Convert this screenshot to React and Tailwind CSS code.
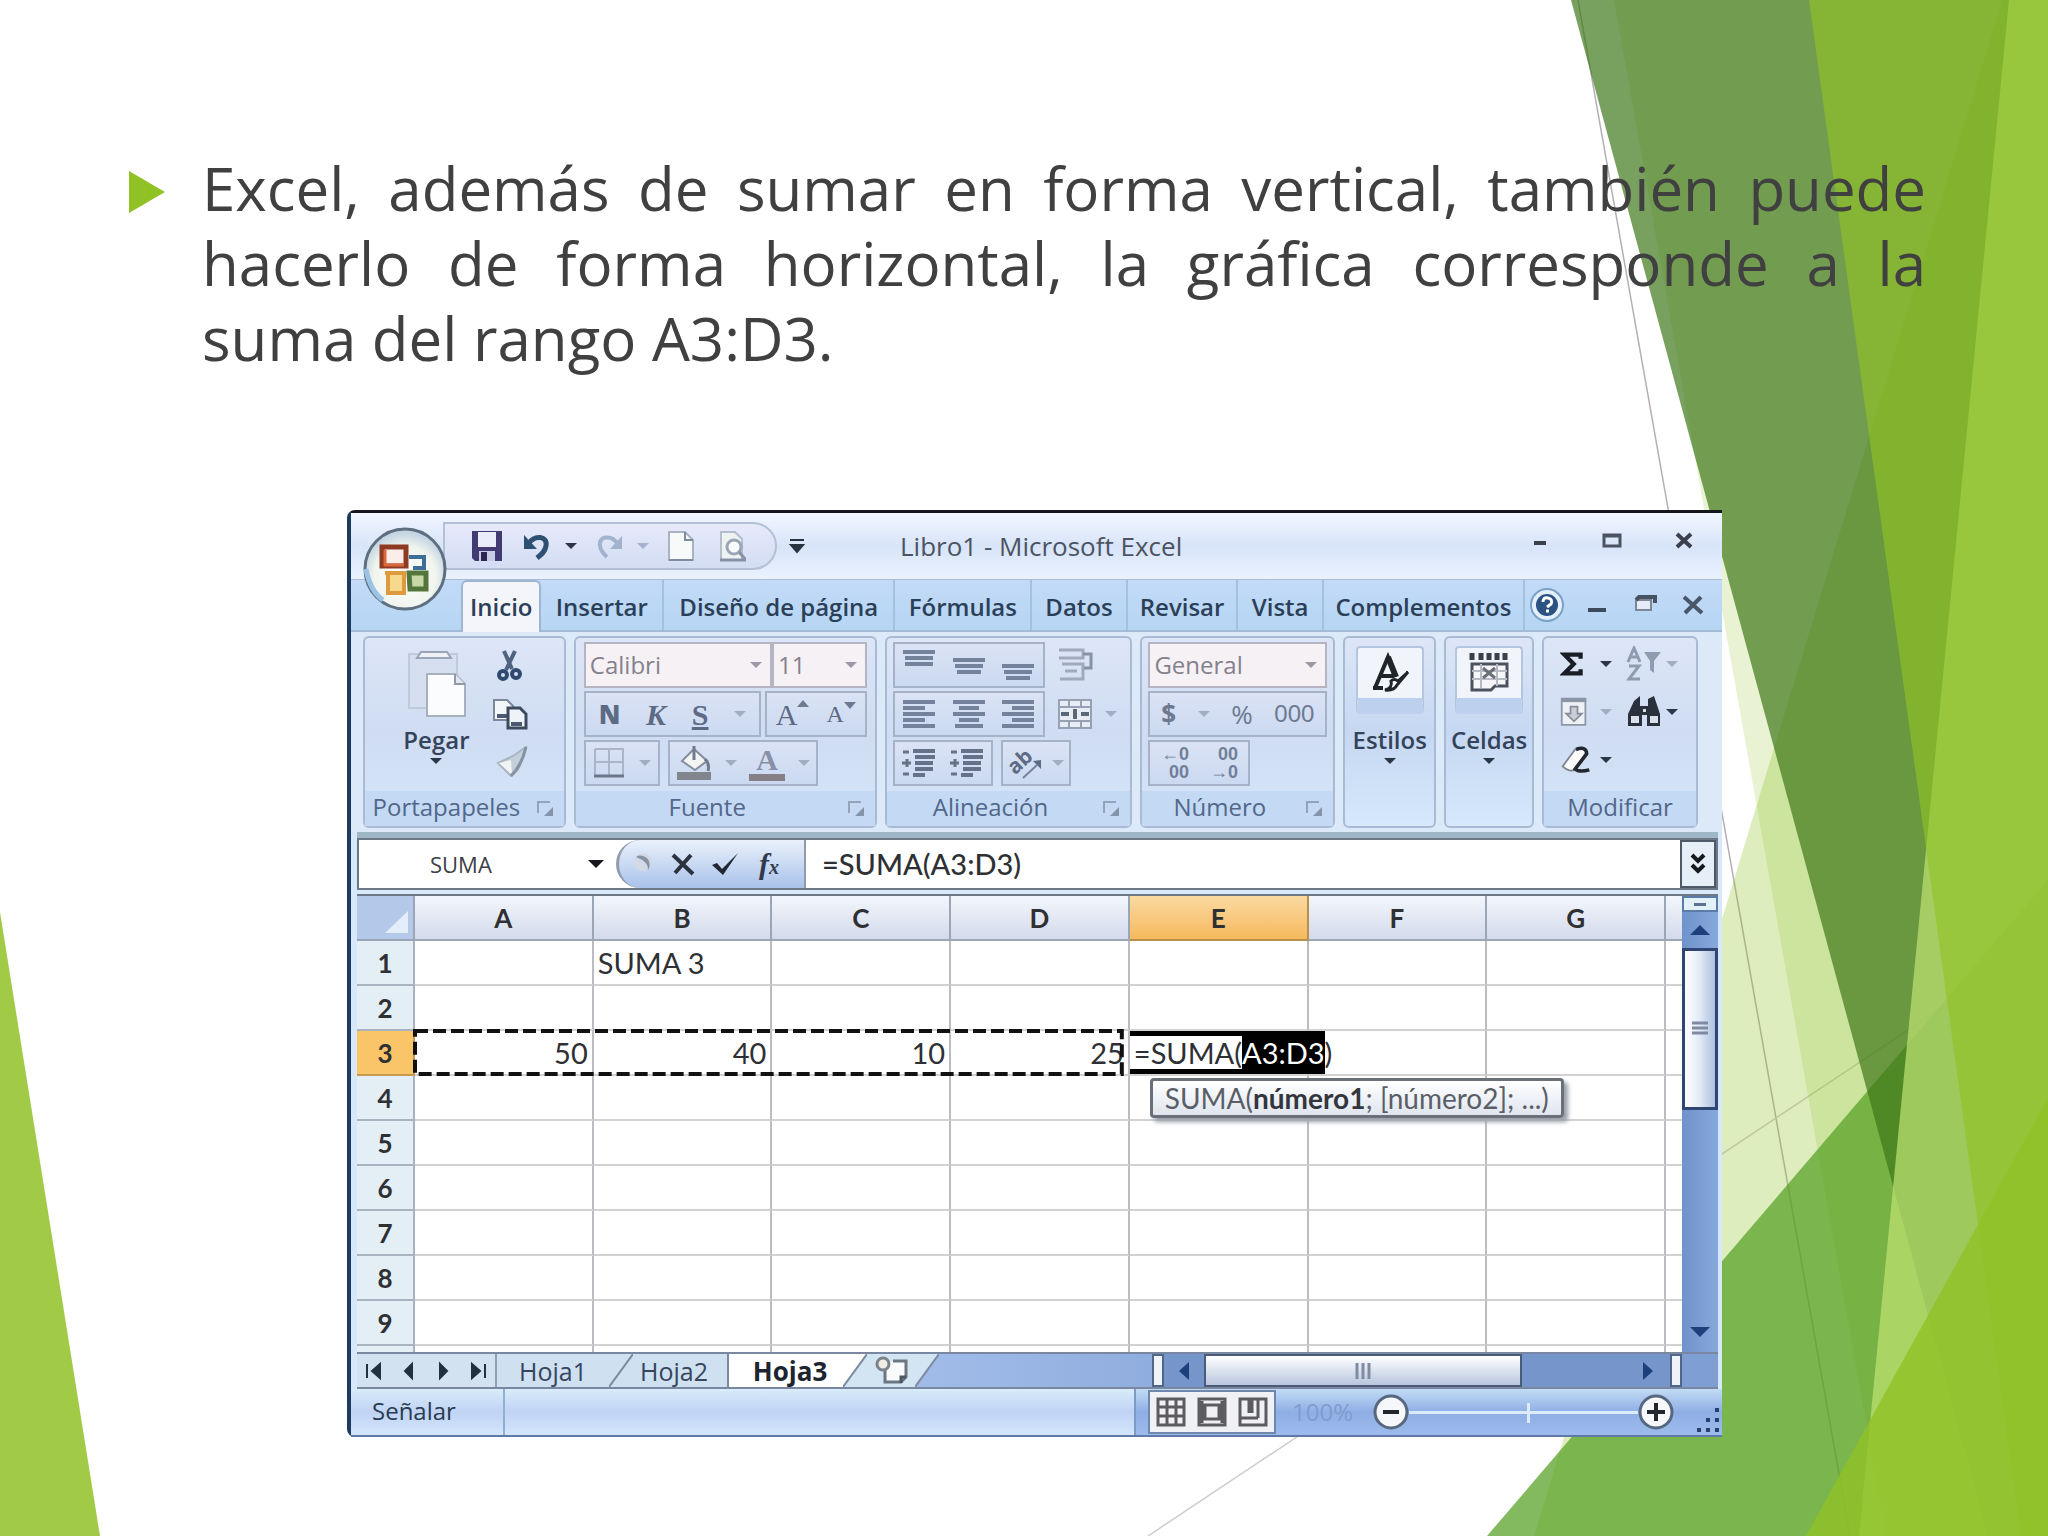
import React, { useState } from 'react';

const columns = ['A', 'B', 'C', 'D', 'E', 'F', 'G'];
const rows = [1, 2, 3, 4, 5, 6, 7, 8, 9];

const cells = {
  B1: 'SUMA 3',
  A3: '50',
  B3: '40',
  C3: '10',
  D3: '25',
};

const ribbonTabs = ['Insertar', 'Diseño de página', 'Fórmulas', 'Datos', 'Revisar', 'Vista', 'Complementos'];

// Slide background facets
const Background = () => (
  <svg className="absolute inset-0 h-full w-full" viewBox="0 0 2048 1536" preserveAspectRatio="none" aria-hidden="true">
    <path d="M1578 0L1850 1536" stroke="#b5afb5" strokeWidth="1.5" />
    <path d="M1148 1536L2048 937" stroke="#cfcbd2" strokeWidth="1.5" />
    <polygon points="1614,0 2048,0 2048,1536 1886,1536" fill="#90c226" opacity="0.2" />
    <polygon points="2002,0 2048,0 2048,1536 1534,1536" fill="#90c226" opacity="0.3" />
    <polygon points="1487,1536 2048,880 2048,1536" fill="#54a021" opacity="0.72" />
    <polygon points="1571,0 2048,0 2048,1536 1988,1536" fill="#3f7819" opacity="0.7" />
    <polygon points="2009,0 2048,0 2048,1536 1859,1536" fill="#c0e474" opacity="0.7" />
    <polygon points="1809,0 2048,0 2048,1536 2021,1536" fill="#90c226" opacity="0.65" />
    <polygon points="1806,1536 2048,1098 2048,1536" fill="#90c226" opacity="0.8" />
    <polygon points="0,912 100,1536 0,1536" fill="#90c226" opacity="0.85" />
  </svg>
);

const Caret = ({ className = 'text-[#2c3646]' }) => (
  <svg className={`w-3 shrink-0 ${className}`} viewBox="0 0 12 7" aria-hidden="true">
    <path d="M0 0h12L6 6z" fill="currentColor" />
  </svg>
);

const IconButton = ({ label, className = '', children }) => (
  <button type="button" aria-label={label} className={`flex items-center justify-center ${className}`}>
    {children}
  </button>
);

const OfficeLogo = () => (
  <svg viewBox="0 0 84 84" className="h-full w-full" aria-hidden="true">
    <defs>
      <radialGradient id="orb" cx="50%" cy="60%" r="55%">
        <stop offset="0" stopColor="#ffffff" />
        <stop offset="0.7" stopColor="#f1f5ee" />
        <stop offset="1" stopColor="#c5d5e3" />
      </radialGradient>
    </defs>
    <circle cx="42" cy="42" r="40" fill="url(#orb)" stroke="#5e6f80" strokeWidth="3" />
    <path d="M3 42q4 22 17 31" fill="none" stroke="#9cc3e6" strokeWidth="5" />
    <path d="M19 20h24v19H19z" fill="#fbeee8" stroke="#8f3a22" strokeWidth="5" />
    <path d="M22 23v15h19" fill="none" stroke="#d9693c" strokeWidth="3" />
    <path d="M46 30h15v11H50" fill="none" stroke="#3e6f98" strokeWidth="4" />
    <path d="M22 46h19v20H25V48" fill="#f6d98c" stroke="#e09a3e" strokeWidth="4" />
    <path d="M46 46h17v16H47z" fill="#c6d8a8" stroke="#54763a" strokeWidth="5" />
  </svg>
);

const TitleBar = () => (
  <div className="grid h-[67px] grid-cols-[549px_auto_1fr] items-center border-b border-[#a9bcd6] bg-gradient-to-b from-[#f2f7ff] via-[#d8e4fa] to-[#e9f2fd]">
    <div className="flex items-center pl-[92px]">
      <div className="flex h-12 w-[334px] items-center rounded-r-full border-2 border-[#b4c0d6] bg-gradient-to-b from-[#e6eafb] to-[#d3ddf3] pl-6">
        <IconButton label="Guardar" className="w-9">
          <svg className="w-8" viewBox="0 0 32 32">
            <path d="M1 1h30v30H4l-3-3z" fill="#423a72" />
            <rect x="7" y="2" width="18" height="15" fill="#e9ecfa" />
            <rect x="8" y="21" width="16" height="10" fill="#c9cce6" />
            <rect x="10" y="22" width="6" height="9" fill="#2b2650" />
          </svg>
        </IconButton>
        <IconButton label="Deshacer" className="ml-4 w-8">
          <svg className="w-7" viewBox="0 0 28 28">
            <path d="M5 12C12 2 25 4 23 14c-1 6-5 9-9 12" fill="none" stroke="#2e5072" strokeWidth="5" />
            <path d="M1 3v14h13z" fill="#2e5072" />
          </svg>
        </IconButton>
        <span className="ml-3"><Caret /></span>
        <IconButton label="Rehacer" className="ml-4 w-8">
          <svg className="w-7" viewBox="0 0 28 28">
            <path d="M23 12C16 2 3 4 5 14c1 6 4 8 7 11" fill="none" stroke="#a3b2cd" strokeWidth="4" />
            <path d="M27 4v13H15z" fill="#a3b2cd" />
          </svg>
        </IconButton>
        <span className="ml-3"><Caret className="text-[#a3b2cd]" /></span>
        <IconButton label="Nuevo" className="ml-4 w-8">
          <svg className="w-7" viewBox="0 0 28 32">
            <path d="M2 2h16l8 8v20H2z" fill="#f7faf8" stroke="#a9b4c3" strokeWidth="2" />
            <path d="M18 2v8h8M2 30h24" fill="none" stroke="#7f8c9d" strokeWidth="2" />
          </svg>
        </IconButton>
        <IconButton label="Vista preliminar" className="ml-5 w-8">
          <svg className="w-8" viewBox="0 0 32 32">
            <path d="M4 2h14l7 7v21H4z" fill="#eef2f2" stroke="#b4becb" strokeWidth="2" />
            <circle cx="17" cy="17" r="7" fill="#f8fbfb" stroke="#9aa6b6" strokeWidth="3" />
            <path d="M22 22l6 7M3 30h26" stroke="#8592a5" strokeWidth="3" />
          </svg>
        </IconButton>
      </div>
      <IconButton label="Personalizar barra" className="ml-2 w-6">
        <svg className="w-4" viewBox="0 0 16 16">
          <path d="M1 2h14M2 7h12l-6 7z" fill="#2a3342" stroke="#2a3342" strokeWidth="2" />
        </svg>
      </IconButton>
    </div>
    <h1 className="text-[26px] text-[#4c5361]">Libro1 - Microsoft Excel</h1>
    <div className="flex items-center justify-end gap-12 pb-3 pr-[26px]">
      <IconButton label="Minimizar" className="h-6 w-6">
        <svg className="w-6" viewBox="0 0 24 24"><path d="M6 15h12" stroke="#3a404c" strokeWidth="4" /></svg>
      </IconButton>
      <IconButton label="Restaurar" className="h-6 w-6">
        <svg className="w-6" viewBox="0 0 24 24"><path d="M4 7h16v11H4zM4 8h16" fill="none" stroke="#4c5360" strokeWidth="3" /></svg>
      </IconButton>
      <IconButton label="Cerrar" className="h-6 w-6">
        <svg className="w-6" viewBox="0 0 24 24"><path d="M5 6l14 13M19 6L5 19" stroke="#3a404c" strokeWidth="4" /></svg>
      </IconButton>
    </div>
  </div>
);

const TabBar = () => (
  <nav className="flex h-[52px] border-b-2 border-[#a2bbd6] bg-gradient-to-b from-[#c3daf8] to-[#b5d6f3] pl-[110px] text-2xl font-semibold text-[#2c3f58]">
    <div className="grid grow grid-cols-[80fr_122fr_230fr_136fr_95fr_110fr_85fr_200fr] items-stretch">
      <button type="button" className="mb-[-2px] whitespace-nowrap rounded-t-md border-2 border-b-0 border-[#9fb6d0] bg-[#f3f5fb]">Inicio</button>
      {ribbonTabs.map((tab) => (
        <button key={tab} type="button" className="whitespace-nowrap border-r-2 border-[#a4c1e0] pt-1">{tab}</button>
      ))}
    </div>
    <div className="flex w-[197px] items-center gap-4 pl-1">
      <IconButton label="Ayuda" className="w-9">
        <svg className="w-9" viewBox="0 0 36 36">
          <circle cx="18" cy="18" r="16" fill="#e3f0fc" stroke="#7aa0c6" strokeWidth="2" />
          <circle cx="18" cy="18" r="11" fill="#2c5282" />
          <path d="M14 15q0-5 5-4t3 6l-4 3M17 24h3" fill="none" stroke="#fff" strokeWidth="3" />
        </svg>
      </IconButton>
      <IconButton label="Minimizar libro" className="w-8">
        <svg className="w-6" viewBox="0 0 24 24"><path d="M3 17h18" stroke="#3c4b5e" strokeWidth="4" /></svg>
      </IconButton>
      <IconButton label="Restaurar libro" className="w-8">
        <svg className="w-6" viewBox="0 0 24 24"><path d="M3 7h15v10H3z" fill="#e4ecf7" stroke="#7b8797" strokeWidth="2" /><path d="M3 7l3-3h16v6" fill="none" stroke="#47515f" strokeWidth="4" /></svg>
      </IconButton>
      <IconButton label="Cerrar libro" className="w-8">
        <svg className="w-6" viewBox="0 0 24 24"><path d="M3 4l18 16M20 4L4 20" stroke="#4a5768" strokeWidth="4" /></svg>
      </IconButton>
    </div>
  </nav>
);

const Launcher = () => (
  <svg className="absolute right-2 top-2 w-5" viewBox="0 0 20 20" aria-hidden="true">
    <path d="M2 14V3h12" fill="none" stroke="#93a3b9" strokeWidth="2" />
    <path d="M17 8v9H8z" fill="#8393aa" />
  </svg>
);

const Group = ({ title, launcher, children }) => (
  <section className="flex min-w-0 flex-col rounded-md border-2 border-[#a9bbd4] bg-gradient-to-b from-[#dde6f7] via-[#cfdcf2] to-[#d6e6fa]">
    <div className="grow">{children}</div>
    <div className={`relative h-[35px] bg-[#c4d9f3] text-center text-2xl font-medium leading-8 text-[#52678a] ${launcher ? 'pr-9' : ''}`}>
      {title}
      {launcher && <Launcher />}
    </div>
  </section>
);

const Box = ({ className = '', children }) => (
  <div className={`flex h-[46px] items-center justify-around border-2 border-[#a5b2c8] bg-gradient-to-b from-[#dbe3f5] to-[#cbd9f1] ${className}`}>
    {children}
  </div>
);

const Combo = ({ label, value, className = '' }) => (
  <label className={`relative flex h-[46px] items-center border-2 border-[#b6b4c2] bg-[#f6f1f5] ${className}`}>
    <select aria-label={label} className="h-full w-full appearance-none bg-transparent pl-1 text-2xl text-[#85818c]" defaultValue={value}>
      <option>{value}</option>
    </select>
    <span className="pointer-events-none absolute right-2"><Caret className="text-[#9c98a6]" /></span>
  </label>
);

const alignShapes = {
  top: 'M2 3h32M4 9h28M4 15h28',
  middle: 'M2 11h32M4 17h28M6 23h24',
  bottom: 'M2 17h32M4 23h28M6 29h24',
  left: 'M2 4h32M2 10h22M2 16h32M2 22h22M2 28h32',
  center: 'M2 4h32M8 10h20M2 16h32M8 22h20M4 28h28',
  right: 'M2 4h32M12 10h22M2 16h32M12 22h22M2 28h32',
};

const AlignButton = ({ label, shape }) => (
  <IconButton label={label}>
    <svg className="w-9" viewBox="0 0 36 32">
      <path d={alignShapes[shape]} stroke="#74829b" strokeWidth="4" />
    </svg>
  </IconButton>
);

const IndentButton = ({ label }) => (
  <IconButton label={label}>
    <svg className="w-9" viewBox="0 0 36 32">
      <path d="M12 4h22M14 10h20M14 16h18M14 22h18M12 28h12" stroke="#66728a" strokeWidth="4" />
      <path d="M2 5h6M1 16h9M2 27h6M6 12v8" stroke="#66728a" strokeWidth="3" />
    </svg>
  </IconButton>
);

const Clipboard = () => (
  <div className="grid grid-cols-[1fr_88px] px-1 pt-2">
    <button type="button" className="flex flex-col items-center pl-8">
      <svg className="h-[72px] w-[66px]" viewBox="0 0 66 72" aria-hidden="true">
        <path d="M6 8h48v54H6z" fill="#d5dff0" stroke="#c0cade" strokeWidth="2" />
        <path d="M14 12h34l-4-6H18z" fill="#eef1f7" stroke="#9aa5b8" strokeWidth="2" />
        <path d="M24 28h28l10 10v32H24z" fill="#fbfcfd" stroke="#a7b1be" strokeWidth="2" />
        <path d="M52 28v10h10" fill="#dfe6ee" stroke="#8f99a8" strokeWidth="2" />
      </svg>
      <span className="mt-1 text-2xl font-semibold leading-9 text-[#34435a]">Pegar</span>
      <Caret />
    </button>
    <div className="flex flex-col items-center gap-4 pr-3 pt-1">
      <IconButton label="Cortar">
        <svg className="h-8 w-8" viewBox="0 0 32 32">
          <path d="M10 1l8 18M21 1l-9 19" stroke="#4f6380" strokeWidth="4" />
          <circle cx="9" cy="25" r="4" fill="none" stroke="#2e4a70" strokeWidth="4" />
          <circle cx="22" cy="24" r="4" fill="none" stroke="#2e4a70" strokeWidth="4" />
        </svg>
      </IconButton>
      <IconButton label="Copiar">
        <svg className="h-8 w-9" viewBox="0 0 36 32">
          <path d="M2 2h13l6 6v14H2z" fill="#f4f7fa" stroke="#7c899c" strokeWidth="2" />
          <path d="M5 18h10" stroke="#4b5a70" strokeWidth="4" />
          <path d="M16 10h12l6 6v14H16z" fill="#eef3f8" stroke="#3c4a5e" strokeWidth="3" />
          <path d="M19 26h11" stroke="#4b5a70" strokeWidth="4" />
        </svg>
      </IconButton>
      <IconButton label="Copiar formato">
        <svg className="h-8 w-9" viewBox="0 0 36 32">
          <path d="M34 1L21 10 6 17l13 13q9-6 10-14z" fill="#c4cfd9" stroke="#a9b5c3" strokeWidth="2" />
          <path d="M7 17l12-3 1 15z" fill="#f1f5f2" />
          <path d="M34 1q-4 18-15 29" fill="none" stroke="#8491a1" strokeWidth="3" />
        </svg>
      </IconButton>
    </div>
  </div>
);

const FontGroup = () => (
  <div className="flex flex-col gap-[3px] px-2 pt-1">
    <div className="grid grid-cols-[189fr_95fr]">
      <Combo label="Fuente" value="Calibri" />
      <Combo label="Tamaño de fuente" value="11" />
    </div>
    <div className="grid grid-cols-[178fr_102fr] gap-1 font-['Liberation_Serif',serif] text-[30px] text-[#5c6a84]">
      <Box>
        <button type="button" className="font-['Open_Sans',sans-serif] text-[26px] font-extrabold">N</button>
        <button type="button" className="font-bold italic">K</button>
        <button type="button" className="font-bold underline">S</button>
        <Caret className="text-[#a1adc3]" />
      </Box>
      <Box>
        <button type="button" className="flex items-start">A<svg className="mt-2 w-3" viewBox="0 0 12 8" aria-hidden="true"><path d="M6 0l6 7H0z" fill="#6d7a94" /></svg></button>
        <button type="button" className="flex items-start text-2xl">A<svg className="mt-1 w-3" viewBox="0 0 12 8" aria-hidden="true"><path d="M0 0h12L6 7z" fill="#6d7a94" /></svg></button>
      </Box>
    </div>
    <div className="flex gap-2">
      <Box className="w-[76px]">
        <IconButton label="Bordes">
          <svg className="w-8" viewBox="0 0 32 32">
            <path d="M2 2h28v26M2 2v26M16 2v26M2 15h28" fill="none" stroke="#aab5c9" strokeWidth="2" />
            <path d="M1 29h30" stroke="#6b7688" strokeWidth="3" />
          </svg>
        </IconButton>
        <Caret className="text-[#a1adc3]" />
      </Box>
      <Box className="w-[150px]">
        <IconButton label="Color de relleno">
          <svg className="w-9" viewBox="0 0 36 36">
            <path d="M6 16L18 4l13 12-12 9z" fill="#f3f4f4" stroke="#868f9d" strokeWidth="2" />
            <path d="M18 1v14M29 14q5 5 3 12" fill="none" stroke="#717b8c" strokeWidth="3" />
            <path d="M1 31h34" stroke="#80858e" strokeWidth="8" />
          </svg>
        </IconButton>
        <Caret className="text-[#a1adc3]" />
        <button type="button" className="flex h-9 w-9 items-center justify-center border-b-[7px] border-[#857f88] font-['Liberation_Serif',serif] text-[30px] font-bold leading-7 text-[#8790a6]">A</button>
        <Caret className="text-[#a1adc3]" />
      </Box>
    </div>
  </div>
);

const AlignmentGroup = () => (
  <div className="flex flex-col gap-[3px] px-1.5 pt-1">
    <div className="flex items-center gap-3">
      <Box className="w-[152px]">
        <AlignButton label="Alinear arriba" shape="top" />
        <AlignButton label="Alinear al medio" shape="middle" />
        <AlignButton label="Alinear abajo" shape="bottom" />
      </Box>
      <IconButton label="Ajustar texto">
        <svg className="w-9" viewBox="0 0 36 36">
          <path d="M2 3h24v8H2M5 17h21v15H3M8 24h12" fill="none" stroke="#a0aabc" strokeWidth="3" />
          <path d="M26 7h8v14h-7" fill="none" stroke="#8592a8" strokeWidth="3" />
        </svg>
      </IconButton>
    </div>
    <div className="flex items-center gap-3">
      <Box className="w-[152px]">
        <AlignButton label="Alinear a la izquierda" shape="left" />
        <AlignButton label="Centrar" shape="center" />
        <AlignButton label="Alinear a la derecha" shape="right" />
      </Box>
      <IconButton label="Combinar y centrar">
        <svg className="w-9" viewBox="0 0 36 32">
          <path d="M2 2h32v28H2zM2 9h32M2 23h32M12 2v7M24 2v7M12 23v7M24 23v7" fill="#e8edf5" stroke="#96a1b4" strokeWidth="2" />
          <path d="M4 16h8M24 16h8M18 11v10" stroke="#5c6778" strokeWidth="4" />
        </svg>
      </IconButton>
      <Caret className="text-[#a1adc3]" />
    </div>
    <div className="flex gap-2">
      <Box className="w-[100px]">
        <IndentButton label="Disminuir sangría" />
        <IndentButton label="Aumentar sangría" />
      </Box>
      <Box className="w-[70px]">
        <IconButton label="Orientación">
          <svg className="w-9 overflow-visible" viewBox="0 0 36 36">
            <text x="2" y="25" transform="rotate(-42 12 20)" fontFamily="Open Sans" fontSize="21" fontWeight="700" fill="#5d6b84">ab</text>
            <path d="M16 33l14-13" stroke="#76839a" strokeWidth="2" />
            <path d="M34 15v9l-8-8z" fill="#5d6b84" />
          </svg>
        </IconButton>
        <Caret className="text-[#a1adc3]" />
      </Box>
    </div>
  </div>
);

const NumberGroup = () => (
  <div className="flex flex-col gap-[3px] px-1.5 pt-1">
    <Combo label="Formato de número" value="General" />
    <Box className="text-2xl text-[#6c7991]">
      <button type="button" className="text-[26px] font-bold">$</button>
      <Caret className="text-[#a1adc3]" />
      <button type="button" className="text-[26px] font-medium">%</button>
      <button type="button" className="font-['Liberation_Sans',sans-serif] text-2xl">000</button>
    </Box>
    <Box className="w-[102px] font-['Liberation_Sans',sans-serif] text-[18px] font-bold leading-[18px] text-[#717f98]">
      <button type="button" className="text-right">←0<br />00</button>
      <button type="button" className="text-right">00<br />→0</button>
    </Box>
  </div>
);

const CollapsedGroup = ({ title, children }) => (
  <button type="button" className="flex min-w-0 flex-col items-center rounded-md border-2 border-[#a9bbd4] bg-gradient-to-b from-[#dde6f7] via-[#c6d8f2] to-[#d6e8fb] pt-2">
    <span className="flex h-[68px] w-[68px] items-start justify-center rounded border-2 border-b-[16px] border-[#b4c5e0] border-b-[#bdd0ee] bg-[#f1f4fa] pt-1">
      {children}
    </span>
    <span className="mt-2 text-2xl font-semibold leading-9 text-[#34435a]">{title}</span>
    <Caret />
  </button>
);

const EditGroup = () => (
  <div className="grid grid-cols-[1fr_1fr] gap-y-3 pl-4 pr-1 pt-2">
    <button type="button" aria-label="Autosuma" className="flex h-9 items-center gap-4">
      <svg className="w-6" viewBox="0 0 28 28"><path d="M24 8V3H5l11 11L5 25h19v-5" fill="none" stroke="#1a1d24" strokeWidth="5" /></svg>
      <Caret />
    </button>
    <button type="button" aria-label="Ordenar y filtrar" className="flex h-9 items-center gap-1">
      <svg className="w-9" viewBox="0 0 36 36">
        <path d="M2 16L8 2l6 14M4 11h8M3 20h10L3 33h11" fill="none" stroke="#8f9bb0" strokeWidth="3" />
        <path d="M18 6h17l-7 9v12l-4-3v-9z" fill="#8f9bb0" />
      </svg>
      <Caret className="text-[#a1adc3]" />
    </button>
    <button type="button" aria-label="Rellenar" className="flex h-9 items-center gap-3">
      <svg className="w-7" viewBox="0 0 32 36">
        <path d="M2 3h27v30H2z" fill="#eef2f6" stroke="#8a95a6" strokeWidth="2" />
        <path d="M2 5h28" stroke="#8a95a6" strokeWidth="4" />
        <path d="M12 12h8v8h5l-9 9-9-9h5z" fill="#c9ced4" stroke="#858e9b" strokeWidth="2" />
      </svg>
      <Caret className="text-[#a1adc3]" />
    </button>
    <button type="button" aria-label="Buscar y seleccionar" className="flex h-9 items-center gap-1">
      <svg className="w-9" viewBox="0 0 36 34">
        <path d="M8 6l6-5v10h8V4l6-3 6 18v12H21V20h-5v11H2V19z" fill="#2b313c" />
        <path d="M5 21h8v7H5zM24 21h8v7h-8zM17 14h3v3h-3z" fill="#d9e0ea" />
      </svg>
      <Caret />
    </button>
    <button type="button" aria-label="Borrar" className="flex h-9 items-center gap-2">
      <svg className="w-8" viewBox="0 0 36 34">
        <path d="M3 24L17 5q10-5 13 3L18 27q-6 5-15-3z" fill="#fbfbfb" stroke="#7c8491" strokeWidth="2" />
        <path d="M18 5q12-4 12 5L17 27q4 4 16 1" fill="none" stroke="#23272f" strokeWidth="4" />
      </svg>
      <Caret />
    </button>
  </div>
);

const Ribbon = () => (
  <div className="grid h-[200px] grid-cols-[203fr_303fr_248fr_195fr_93fr_90fr_156fr] gap-2 bg-[#dce9f8] py-1 pl-3 pr-6">
    <Group title="Portapapeles" launcher><Clipboard /></Group>
    <Group title="Fuente" launcher><FontGroup /></Group>
    <Group title="Alineación" launcher><AlignmentGroup /></Group>
    <Group title="Número" launcher><NumberGroup /></Group>
    <CollapsedGroup title="Estilos">
      <svg className="w-10" viewBox="0 0 40 42">
        <path d="M3 36h10M5 36L18 5l6 14M11 24h13" fill="none" stroke="#20242c" strokeWidth="4" />
        <path d="M18 5l8 20" stroke="#20242c" strokeWidth="6" />
        <path d="M38 20L27 33q-3 6-12 5 8-2 6-9 3-3 7 0z" fill="#fff" stroke="#20242c" strokeWidth="3" />
      </svg>
    </CollapsedGroup>
    <CollapsedGroup title="Celdas">
      <svg className="w-10" viewBox="0 0 40 42">
        <path d="M3 1v7M12 1v7M20 1v7M28 1v7M36 1v7" stroke="#3a3f49" strokeWidth="5" />
        <path d="M3 12h35v22H26l-4 4H3z" fill="#f6f6f8" stroke="#4c525e" strokeWidth="3" />
        <path d="M3 19h35M3 27h35M12 12v24M28 12v22" stroke="#b5bac4" strokeWidth="2" />
        <path d="M14 16l12 10M26 16L14 26" stroke="#6b7079" strokeWidth="3" />
      </svg>
    </CollapsedGroup>
    <Group title="Modificar"><EditGroup /></Group>
  </div>
);

const FormulaBar = ({ formula, onChange }) => (
  <div className="border-t-[6px] border-[#9fb6c6]">
    <div className="flex h-[52px] items-stretch border-2 border-[#6d7785] bg-white">
      <div className="relative flex w-[257px] items-center">
        <input aria-label="Cuadro de nombres" defaultValue="SUMA" className="w-full bg-transparent pl-[71px] text-[22px] text-[#3b4048] outline-none" />
        <svg className="absolute right-3 w-4" viewBox="0 0 16 10" aria-hidden="true"><path d="M0 1h16L8 9z" fill="#14171c" /></svg>
      </div>
      <div className="flex w-[190px] items-center gap-4 rounded-l-full border-l-[3px] border-r-2 border-[#8e9cae] bg-gradient-to-b from-[#eaf1fb] to-[#a9c2ea] pl-3">
        <svg className="w-6" viewBox="0 0 24 24" aria-hidden="true">
          <circle cx="12" cy="10" r="9" fill="#d3dae5" />
          <path d="M5 5a9 9 0 0 1 12 13q1-8-12-13z" fill="#8693a6" />
        </svg>
        <IconButton label="Cancelar">
          <svg className="w-6" viewBox="0 0 24 24"><path d="M2 3l20 19M20 3L4 21" stroke="#2d333e" strokeWidth="4" /></svg>
        </IconButton>
        <IconButton label="Introducir">
          <svg className="w-7" viewBox="0 0 28 24"><path d="M1 13l5-2 5 6L27 1 12 23z" fill="#222833" /></svg>
        </IconButton>
        <button type="button" aria-label="Insertar función" className="ml-1 font-['Liberation_Serif',serif] text-[30px] font-bold italic leading-8 text-[#313a4c]">
          f<span className="text-xl">x</span>
        </button>
      </div>
      <input
        aria-label="Barra de fórmulas"
        value={formula}
        onChange={onChange}
        className="min-w-0 grow px-4 font-['Lato',sans-serif] text-[29px] font-medium text-[#2e3034] outline-none"
      />
      <button type="button" aria-label="Expandir barra de fórmulas" className="flex w-9 items-center justify-center border-2 border-[#4d5966] bg-[#e6eef7]">
        <svg className="w-4" viewBox="0 0 16 22"><path d="M2 2l6 6 6-6M2 12l6 6 6-6" fill="none" stroke="#16191e" strokeWidth="4" /></svg>
      </button>
    </div>
  </div>
);

const Marquee = () => (
  <svg className="pointer-events-none absolute left-0 top-0 z-10 h-full w-[400%] overflow-visible" aria-hidden="true">
    <rect width="100%" height="100%" fill="none" stroke="#111" strokeWidth="4" strokeDasharray="13 5" />
  </svg>
);

const EditingCell = () => (
  <div className="absolute left-0 top-0 z-20 flex h-full w-full items-center whitespace-nowrap border-y-[5px] border-black bg-white pl-1 text-[29px]">
    <span>=SUMA(</span>
    <span className="bg-black leading-[43px] text-white">A3:D3</span>
    <span>)</span>
    <div className="absolute left-5 top-[42px] flex h-[40px] items-center rounded border-[3px] border-[#6b7078] bg-gradient-to-b from-white to-[#dfe5ef] px-3 text-[28px] text-[#5a5e66] shadow-[4px_4px_4px_#9aa0a8]">
      <span>SUMA(</span>
      <b className="font-bold text-[#33363c]">número1</b>
      <span className="whitespace-pre">; [número2]; ...)</span>
    </div>
  </div>
);

const Sheet = () => (
  <table className="w-full table-fixed border-separate border-spacing-0 bg-white font-['Lato',sans-serif] text-[29px] leading-8 text-[#2e3034]">
    <colgroup>
      <col className="w-[58px]" />
      {columns.map((c) => <col key={c} />)}
      <col className="w-4" />
    </colgroup>
    <thead>
      <tr className="h-[45px]">
        <th className="border-b-2 border-r-2 border-[#9aa5b5] bg-[#b4c8ea] p-0 pb-1 pr-1 align-bottom">
          <svg className="ml-auto w-6" viewBox="0 0 24 24" aria-label="Seleccionar todo"><path d="M23 0v22H0z" fill="#e4eefb" /></svg>
        </th>
        {columns.map((c) => (
          <th
            key={c}
            scope="col"
            className={`border-b-2 border-r-2 p-0 text-[26px] font-bold ${
              c === 'E'
                ? 'border-[#b98f4c] bg-gradient-to-b from-[#fbd9a0] to-[#f5b95c]'
                : 'border-[#9aa5b5] bg-gradient-to-b from-[#f3f6fc] to-[#d3daeb]'
            }`}
          >
            {c}
          </th>
        ))}
        <th className="border-b-2 border-[#9aa5b5] bg-gradient-to-b from-[#f3f6fc] to-[#d3daeb] p-0" />
      </tr>
    </thead>
    <tbody>
      {rows.map((r) => (
        <tr key={r} className="h-[45px]">
          <th
            scope="row"
            className={`border-b-2 border-r-2 p-0 text-[26px] font-bold ${
              r === 3 ? 'border-[#c79a52] bg-[#fac468]' : 'border-[#a7b3bf] bg-[#e3eef5]'
            }`}
          >
            {r}
          </th>
          {columns.map((c) => {
            const id = `${c}${r}`;
            return (
              <td
                key={id}
                className={`relative border-b-2 border-r-2 border-b-[#d2d2d4] border-r-[#bcbcc4] p-0 px-1 ${r === 3 ? 'text-right' : 'text-left'}`}
              >
                {cells[id]}
                {id === 'A3' && <Marquee />}
                {id === 'E3' && <EditingCell />}
              </td>
            );
          })}
          <td className="border-b-2 border-[#d2d2d4] p-0" />
        </tr>
      ))}
      <tr className="h-1.5">
        <th className="border-r-2 border-[#a7b3bf] bg-[#e3eef5] p-0" />
        {columns.map((c) => <td key={c} className="border-r-2 border-[#bcbcc4] p-0" />)}
        <td className="p-0" />
      </tr>
    </tbody>
  </table>
);

const VerticalScroll = () => (
  <div className="flex w-9 shrink-0 flex-col items-stretch bg-gradient-to-r from-[#6f92cb] to-[#87a8dc]">
    <div className="flex h-4 items-center justify-center border-2 border-[#5b7ba8] bg-[#e3f1f8]">
      <span className="h-[3px] w-3 bg-[#5c7390]" />
    </div>
    <IconButton label="Subir" className="h-9">
      <svg className="w-5" viewBox="0 0 20 12"><path d="M10 1l10 10H0z" fill="#1d3f7c" /></svg>
    </IconButton>
    <div className="flex h-[162px] items-center justify-center border-[3px] border-[#2f4672] bg-gradient-to-r from-white via-[#e2e9f6] to-[#aebfde]">
      <svg className="w-4" viewBox="0 0 16 16" aria-hidden="true"><path d="M0 2h16M0 7h16M0 12h16" stroke="#7e8ba3" strokeWidth="3" /></svg>
    </div>
    <IconButton label="Bajar" className="mt-auto h-10">
      <svg className="w-5" viewBox="0 0 20 12"><path d="M10 11l10-10H0z" fill="#1d3f7c" /></svg>
    </IconButton>
  </div>
);

const navShapes = [
  ['Primera hoja', 'M3 3v14M16 3l-8 7 8 7z'],
  ['Hoja anterior', 'M13 3l-7 7 7 7z'],
  ['Hoja siguiente', 'M7 3l7 7-7 7z'],
  ['Última hoja', 'M17 3v14M4 3l8 7-8 7z'],
];

// Slanted edge between two sheet tabs
const Slant = ({ left, right }) => (
  <svg className="h-full w-6 shrink-0" viewBox="0 0 24 36" preserveAspectRatio="none" aria-hidden="true">
    <path d="M0 0h24L0 36z" fill={left} />
    <path d="M24 0v36H0z" fill={right} />
    <path d="M24 0L0 36" stroke="#7b8aa0" strokeWidth="2" />
  </svg>
);

const SheetTabs = () => (
  <div className="flex h-[37px] items-stretch border-y-2 border-[#7988a0] bg-gradient-to-r from-[#a9c3ec] to-[#7f9fd4] text-[25px] font-medium leading-8 text-[#35465e]">
    <div className="flex w-[140px] items-center justify-around border-r-2 border-[#8fa0b5] bg-[#d3e2f0]">
      {navShapes.map(([label, d]) => (
        <IconButton key={label} label={label}>
          <svg className="w-5" viewBox="0 0 20 20"><path d={d} fill="#22303f" stroke="#22303f" strokeWidth="2" /></svg>
        </IconButton>
      ))}
    </div>
    <button type="button" className="w-[112px] bg-[#cfe0f0]">Hoja1</button>
    <Slant left="#cfe0f0" right="#cfe0f0" />
    <button type="button" className="w-[96px] border-r-2 border-[#7b8aa0] bg-[#cfe0f0] pr-3">Hoja2</button>
    <button type="button" className="w-[114px] bg-white pl-2 text-[26px] font-bold text-[#1d2530]">Hoja3</button>
    <Slant left="#ffffff" right="#d3e4f2" />
    <button type="button" aria-label="Insertar hoja de cálculo" className="flex w-[48px] items-center justify-center bg-[#d3e4f2]">
      <svg className="w-9" viewBox="0 0 36 30">
        <path d="M12 8v18h16l5-5V5H20" fill="#f8fafb" stroke="#6c7683" strokeWidth="3" />
        <path d="M33 21h-5v6" fill="none" stroke="#4d5662" strokeWidth="3" />
        <circle cx="10" cy="8" r="6" fill="#f0eee4" stroke="#7d838b" strokeWidth="3" />
      </svg>
    </button>
    <Slant left="#d3e4f2" right="#a0bbe8" />
    <div className="grow bg-gradient-to-r from-[#a0bbe8] to-[#8fadde]" />
    <div className="flex w-[530px] items-stretch bg-[#7695ca]">
      <div className="w-3 border-2 border-[#51678a] bg-[#eef3f9]" />
      <IconButton label="Desplazar a la izquierda" className="w-10">
        <svg className="w-3" viewBox="0 0 12 20"><path d="M11 1v18L1 10z" fill="#1d3f7c" /></svg>
      </IconButton>
      <div className="flex w-[318px] items-center justify-center border-2 border-[#4b5b78] bg-gradient-to-b from-white to-[#b9c6de]">
        <svg className="w-4" viewBox="0 0 16 16" aria-hidden="true"><path d="M2 0v16M8 0v16M14 0v16" stroke="#7e8ba3" strokeWidth="3" /></svg>
      </div>
      <IconButton label="Desplazar a la derecha" className="ml-auto w-11">
        <svg className="w-3" viewBox="0 0 12 20"><path d="M1 1v18l10-9z" fill="#1d3f7c" /></svg>
      </IconButton>
      <div className="w-3 border-2 border-[#51678a] bg-[#eef3f9]" />
    </div>
    <div className="w-9 bg-[#7f9fd4]" />
  </div>
);

const views = [
  ['Normal', 'M3 3h26v26H3zM3 11h26M3 20h26M12 3v26M21 3v26'],
  ['Diseño de página', 'M3 3h26v26H3zM9 9h14v14H9zM6 5v22M26 5v22'],
  ['Vista previa de salto de página', 'M3 3h26v26H3zM12 3v14M21 3v19M4 22h17M15 3v14'],
];

const StatusBar = () => (
  <footer className="flex h-12 items-stretch border-b-2 border-[#5d79a8] bg-gradient-to-b from-[#d8ecfa] via-[#c0d3f5] to-[#d3e6fb]">
    <div className="w-[154px] border-r-2 border-[#95aecb] pl-[21px] text-2xl font-medium leading-[44px] text-[#2b3b50]">Señalar</div>
    <div className="grow" />
    <div className="flex w-[588px] items-center border-l-2 border-[#7d99c4] bg-gradient-to-b from-[#c2dcf5] via-[#8faee4] to-[#9dbbec] pl-3">
      <div className="flex h-11 w-[128px] items-center justify-around border-2 border-[#6f86ad] bg-[#f0f1f4]">
        {views.map(([label, d]) => (
          <IconButton key={label} label={label}>
            <svg className="w-8" viewBox="0 0 32 32"><path d={d} fill="none" stroke="#5c5b60" strokeWidth="3" /></svg>
          </IconButton>
        ))}
      </div>
      <span className="w-[97px] pl-4 text-2xl text-[#7f9ccf]">100%</span>
      <IconButton label="Alejar" className="w-9">
        <svg className="w-9" viewBox="0 0 36 36"><circle cx="18" cy="18" r="16" fill="#f5f7fa" stroke="#56677f" strokeWidth="3" /><path d="M10 18h16" stroke="#23262c" strokeWidth="4" /></svg>
      </IconButton>
      <input
        type="range"
        aria-label="Zoom"
        defaultValue="52"
        className="h-6 min-w-0 grow appearance-none bg-transparent [&::-webkit-slider-runnable-track]:h-[3px] [&::-webkit-slider-runnable-track]:bg-[#dcebfb] [&::-webkit-slider-thumb]:mt-[-8px] [&::-webkit-slider-thumb]:h-5 [&::-webkit-slider-thumb]:w-[3px] [&::-webkit-slider-thumb]:appearance-none [&::-webkit-slider-thumb]:bg-[#dcebfb]"
      />
      <IconButton label="Acercar" className="w-9">
        <svg className="w-9" viewBox="0 0 36 36"><circle cx="18" cy="18" r="16" fill="#f5f7fa" stroke="#56677f" strokeWidth="3" /><path d="M9 18h18M18 9v18" stroke="#23262c" strokeWidth="4" /></svg>
      </IconButton>
      <svg className="ml-5 mt-4 w-7" viewBox="0 0 28 28" aria-hidden="true">
        <path d="M21 2h4v4h-4zM21 12h4v4h-4zM21 22h4v4h-4zM12 12h4v4h-4zM12 22h4v4h-4zM3 22h4v4H3z" fill="#27406f" />
      </svg>
    </div>
  </footer>
);

const ExcelWindow = () => {
  const [formula, setFormula] = useState('=SUMA(A3:D3)');

  return (
    <div className="relative rounded-l-lg border-l-4 border-t-[3px] border-l-[#1d3a5f] border-t-[#15171c] bg-[#d7e8fa] font-['Open_Sans',sans-serif]">
      <TitleBar />
      <TabBar />
      <button type="button" aria-label="Botón de Office" className="absolute left-3 top-[14px] h-[84px] w-[84px]">
        <OfficeLogo />
      </button>
      <Ribbon />
      <div className="pl-1.5 pr-1">
        <FormulaBar formula={formula} onChange={(e) => setFormula(e.target.value)} />
        <div className="mt-1 flex border-t-2 border-[#6d7785]">
          <div className="min-w-0 grow">
            <Sheet />
          </div>
          <VerticalScroll />
        </div>
        <SheetTabs />
      </div>
      <StatusBar />
    </div>
  );
};

export default function App() {
  return (
    <main className="relative min-h-screen overflow-hidden bg-white">
      <Background />
      <div className="relative">
        <ul className="pl-[128px] pr-[122px] pt-[151px]">
          <li className="flex items-start">
            <svg className="mr-[36px] mt-[19px] w-[38px] shrink-0" viewBox="0 0 38 44" aria-hidden="true">
              <path d="M1 1l36 21L1 43z" fill="#90c226" />
            </svg>
            <p className="text-justify font-['Open_Sans',sans-serif] text-[60px] leading-[75px] text-[#404040]">
              Excel, además de sumar en forma vertical, también puede hacerlo de forma horizontal, la gráfica corresponde a la suma&nbsp;del rango A3:D3.
            </p>
          </li>
        </ul>
        <div className="pb-[98px] pl-[347px] pr-[326px] pt-[134px]">
          <ExcelWindow />
        </div>
      </div>
    </main>
  );
}
